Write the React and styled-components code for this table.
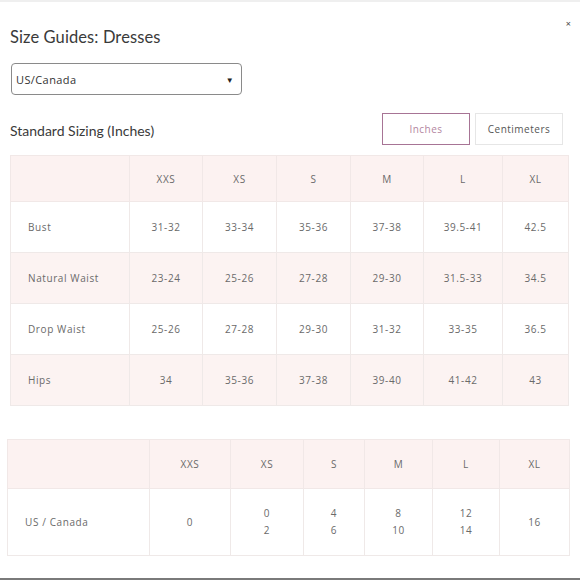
import React from 'react'
import styled, { createGlobalStyle } from 'styled-components';

const GlobalStyle = createGlobalStyle`
  html, body {
    margin: 0;
    padding: 0;
    background: #fff;
  }
  body {
    width: 580px;
    height: 580px;
    overflow: hidden;
    font-family: 'Open Sans', 'Liberation Sans', sans-serif;
  }
`;

const Page = styled.div`
  width: 580px;
  height: 580px;
  display: flex;
  flex-direction: column;
  border-top: 2px solid #efefef;
  border-bottom: 2px solid #7a7a7a;
  box-sizing: border-box;
`;

const Header = styled.div`
  display: flex;
  justify-content: space-between;
  align-items: flex-start;
  padding: 15px 9px 0 10px;
  height: 45px;
  box-sizing: border-box;
`;

const Title = styled.h1`
  margin: 10px 0 0;
  font-family: 'Lato', 'Liberation Sans', sans-serif;
  font-weight: 400;
  font-size: 16.5px;
  color: #3a3a3a;
  letter-spacing: 0.1px;
`;

const Close = styled.span`
  font-size: 9px;
  line-height: 1;
  color: #444;
  margin-top: 2px;
`;

const SelectBox = styled.div`
  margin: 16px 0 0 11px;
  width: 231px;
  height: 32px;
  box-sizing: border-box;
  border: 1.5px solid #8a8a8a;
  border-radius: 4px;
  display: flex;
  align-items: center;
  justify-content: space-between;
  padding: 0 7px 0 4px;
  font-size: 11px;
  color: #333;
  letter-spacing: 0.4px;
`;

const Caret = styled.span`
  font-size: 8px;
  color: #222;
`;

const SizingRow = styled.div`
  display: flex;
  justify-content: space-between;
  align-items: center;
  margin-top: 18px;
  padding: 0 17px 0 10px;
`;

const SubTitle = styled.h2`
  margin: 3px 0 0;
  font-family: 'Lato', 'Liberation Sans', sans-serif;
  font-weight: 400;
  font-size: 14px;
  color: #3a3a3a;
`;

const Toggle = styled.div`
  display: flex;
  gap: 5px;
`;

const UnitButton = styled.button`
  width: 88px;
  height: 32px;
  background: #fff;
  border: ${p => (p.$active ? '1.5px solid #a77495' : '1px solid #e6e6e6')};
  color: ${p => (p.$active ? '#b3869f' : '#555')};
  font-family: 'Open Sans', 'Liberation Sans', sans-serif;
  font-size: 10px;
  letter-spacing: 0.5px;
  padding: 0;
`;

const Table = styled.table`
  border-collapse: collapse;
  table-layout: fixed;
  width: ${p => p.$width}px;
  margin: ${p => p.$margin};
  font-size: 10px;
  color: #6a6a6a;
  letter-spacing: 0.6px;
`;

const Th = styled.th`
  background: #fcf2f1;
  font-weight: 400;
  height: ${p => p.$height}px;
  border: 1px solid #f1e8e7;
  text-align: center;
  padding: 0;
`;

const Td = styled.td`
  background: ${p => (p.$pink ? '#fcf3f2' : '#fff')};
  height: ${p => p.$height}px;
  border: 1px solid #efe9e8;
  text-align: ${p => (p.$label ? 'left' : 'center')};
  padding: ${p => (p.$label ? '0 0 0 17px' : '0')};
  line-height: 17px;
`;

const sizes = ['XXS', 'XS', 'S', 'M', 'L', 'XL'];

const inchRows = [
  ['Bust', '31-32', '33-34', '35-36', '37-38', '39.5-41', '42.5'],
  ['Natural Waist', '23-24', '25-26', '27-28', '29-30', '31.5-33', '34.5'],
  ['Drop Waist', '25-26', '27-28', '29-30', '31-32', '33-35', '36.5'],
  ['Hips', '34', '35-36', '37-38', '39-40', '41-42', '43'],
];

const countryRow = ['US / Canada', ['0'], ['0', '2'], ['4', '6'], ['8', '10'], ['12', '14'], ['16']];

const cols1 = [119, 73, 74, 74, 73, 79, 66];
const cols2 = [142, 81, 73, 61, 68, 67, 70];

const App = () => {
  return (
    <>
      <GlobalStyle />
      <Page>
        <Header>
          <Title>Size Guides: Dresses</Title>
          <Close>×</Close>
        </Header>
        <SelectBox>
          <span>US/Canada</span>
          <Caret>▼</Caret>
        </SelectBox>
        <SizingRow>
          <SubTitle>Standard Sizing (Inches)</SubTitle>
          <Toggle>
            <UnitButton $active>Inches</UnitButton>
            <UnitButton>Centimeters</UnitButton>
          </Toggle>
        </SizingRow>

        <Table $width={558} $margin="10px 0 0 10px">
          <colgroup>
            {cols1.map((w, i) => <col key={i} style={{ width: w }} />)}
          </colgroup>
          <thead>
            <tr>
              <Th $height={45}></Th>
              {sizes.map(s => <Th key={s} $height={45}>{s}</Th>)}
            </tr>
          </thead>
          <tbody>
            {inchRows.map((row, i) => (
              <tr key={row[0]}>
                {row.map((cell, j) => (
                  <Td key={j} $height={50} $pink={i % 2 === 1} $label={j === 0}>{cell}</Td>
                ))}
              </tr>
            ))}
          </tbody>
        </Table>

        <Table $width={562} $margin="33px 0 0 7px">
          <colgroup>
            {cols2.map((w, i) => <col key={i} style={{ width: w }} />)}
          </colgroup>
          <thead>
            <tr>
              <Th $height={48}></Th>
              {sizes.map(s => <Th key={s} $height={48}>{s}</Th>)}
            </tr>
          </thead>
          <tbody>
            <tr>
              {countryRow.map((cell, j) => (
                <Td key={j} $height={66} $label={j === 0}>
                  {j === 0 ? cell : cell.map((v, k) => <div key={k}>{v}</div>)}
                </Td>
              ))}
            </tr>
          </tbody>
        </Table>
      </Page>
    </>
  )
}

export default App;
